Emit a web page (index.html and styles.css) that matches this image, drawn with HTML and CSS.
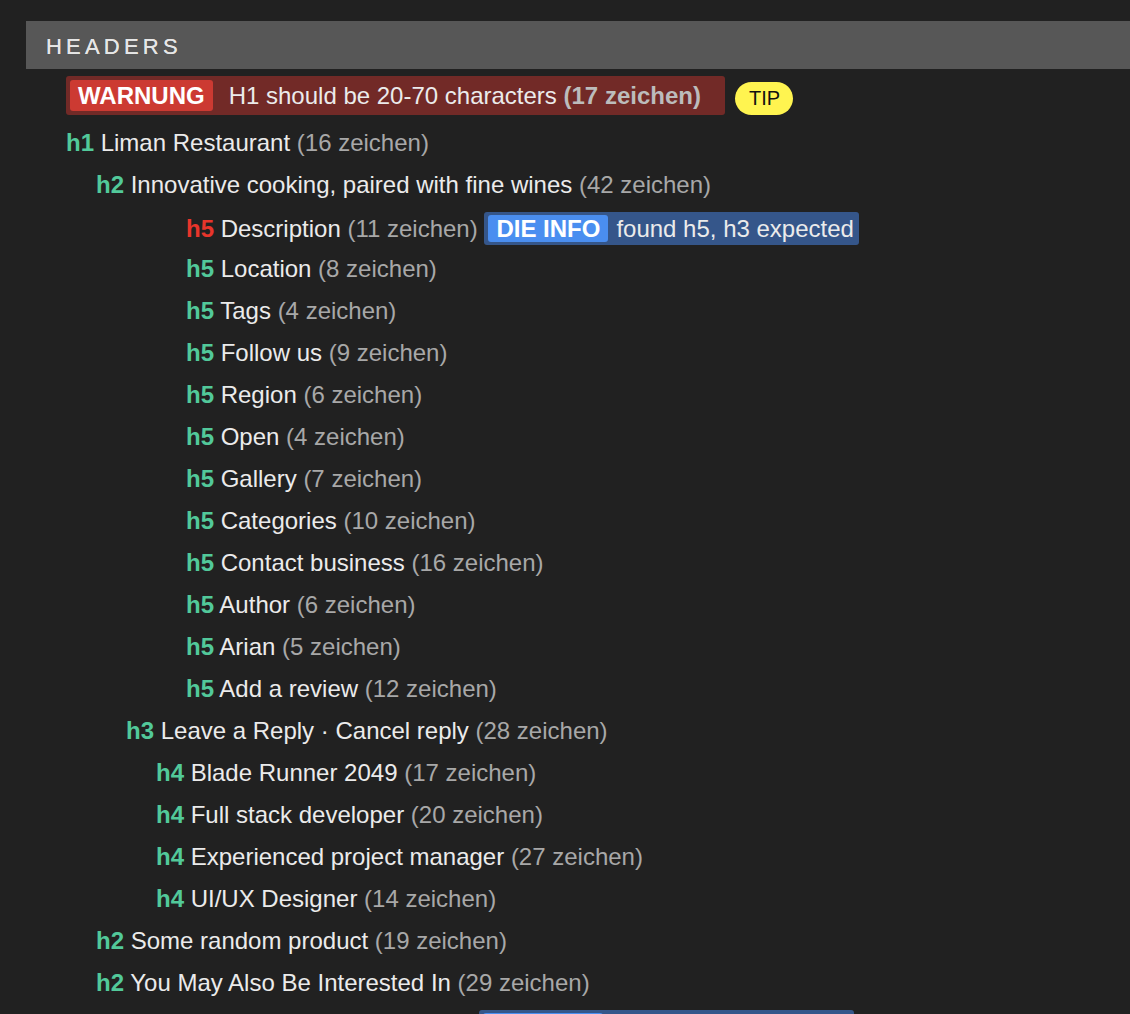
FILE: index.html
```html
<!DOCTYPE html>
<html lang="en">
<head>
    <meta charset="UTF-8">
    <meta name="viewport" content="width=device-width, initial-scale=1.0">
    <title>Headers</title>
    <link rel="stylesheet" href="styles.css">
</head>
<body>

<div class="panel">
    <div class="panel-title">HEADERS</div>

    <div class="notice-row">
        <div class="notice warn">
            <span class="notice-label">WARNUNG</span>
            <span class="notice-text">H1 should be 20-70 characters <b class="notice-count">(17 zeichen)</b></span>
        </div>
        <span class="tip">TIP</span>
    </div>

    <ul class="outline">
        <li class="lvl-1"><span class="tag">h1</span> Liman Restaurant <span class="count">(16 zeichen)</span></li>
        <li class="lvl-2"><span class="tag">h2</span> Innovative cooking, paired with fine wines <span class="count">(42 zeichen)</span></li>
        <li class="lvl-5 flagged"><span class="tag bad">h5</span> Description <span class="count">(11 zeichen)</span>
            <span class="notice info"><span class="notice-label">DIE INFO</span><span class="notice-text">found h5, h3 expected</span></span>
        </li>
        <li class="lvl-5"><span class="tag">h5</span> Location <span class="count">(8 zeichen)</span></li>
        <li class="lvl-5"><span class="tag">h5</span> Tags <span class="count">(4 zeichen)</span></li>
        <li class="lvl-5"><span class="tag">h5</span> Follow us <span class="count">(9 zeichen)</span></li>
        <li class="lvl-5"><span class="tag">h5</span> Region <span class="count">(6 zeichen)</span></li>
        <li class="lvl-5"><span class="tag">h5</span> Open <span class="count">(4 zeichen)</span></li>
        <li class="lvl-5"><span class="tag">h5</span> Gallery <span class="count">(7 zeichen)</span></li>
        <li class="lvl-5"><span class="tag">h5</span> Categories <span class="count">(10 zeichen)</span></li>
        <li class="lvl-5"><span class="tag">h5</span> Contact business <span class="count">(16 zeichen)</span></li>
        <li class="lvl-5"><span class="tag">h5</span> Author <span class="count">(6 zeichen)</span></li>
        <li class="lvl-5"><span class="tag">h5</span> Arian <span class="count">(5 zeichen)</span></li>
        <li class="lvl-5"><span class="tag">h5</span> Add a review <span class="count">(12 zeichen)</span></li>
        <li class="lvl-3"><span class="tag">h3</span> Leave a Reply · Cancel reply <span class="count">(28 zeichen)</span></li>
        <li class="lvl-4"><span class="tag">h4</span> Blade Runner 2049 <span class="count">(17 zeichen)</span></li>
        <li class="lvl-4"><span class="tag">h4</span> Full stack developer <span class="count">(20 zeichen)</span></li>
        <li class="lvl-4"><span class="tag">h4</span> Experienced project manager <span class="count">(27 zeichen)</span></li>
        <li class="lvl-4"><span class="tag">h4</span> UI/UX Designer <span class="count">(14 zeichen)</span></li>
        <li class="lvl-2"><span class="tag">h2</span> Some random product <span class="count">(19 zeichen)</span></li>
        <li class="lvl-2"><span class="tag">h2</span> You May Also Be Interested In <span class="count">(29 zeichen)</span></li>
        <li class="lvl-5 flagged"><span class="tag bad">h5</span> Newsletter <span class="count">(10 zeichen)</span>
            <span class="notice info"><span class="notice-label">DIE INFO</span><span class="notice-text">found h5, h3 expected</span></span>
        </li>
    </ul>
</div>

</body>
</html>
```

FILE: styles.css
```css
body {
    margin: 0;
    background-color: #212121;
    color: #ebebeb;
    font-family: "Liberation Sans", Arial, Helvetica, sans-serif;
    font-size: 24px;
    overflow: hidden;
}

.panel {
    padding: 21px 0 0 26px;
}

.panel-title {
    height: 48px;
    box-sizing: border-box;
    display: flex;
    align-items: center;
    padding: 3px 0 0 20px;
    background-color: #575757;
    color: #e6e6e6;
    font-size: 22px;
    letter-spacing: 4.2px;
    text-shadow: 0 0 0.6px #e6e6e6;
}

/* warning line under the title */
.notice-row {
    display: flex;
    align-items: center;
    gap: 12px;
    margin: 7px 0 0 40px;
}

.notice {
    display: inline-flex;
    align-items: center;
    border-radius: 3px;
    white-space: nowrap;
}

.notice-label {
    color: #fff;
    font-weight: bold;
    border-radius: 3px;
}

.warn {
    background-color: #722a27;
    padding: 4px 24px 4px 4px;
}

.warn .notice-label {
    background-color: #cc3a32;
    line-height: 31px;
    padding: 0 8px;
    margin-right: 16px;
}

.notice-count {
    color: #bcbcbc;
}

.info {
    background-color: #35568a;
    padding: 3px 5px 3px 4px;
    line-height: 27px;
}

.info .notice-label {
    background-color: #4a8ef0;
    padding: 0 8px;
    margin-right: 8px;
}

.tip {
    display: inline-block;
    background-color: #fff450;
    color: #111;
    font-size: 20px;
    line-height: 33px;
    padding: 0 13px 0 14px;
    border-radius: 17px;
    margin: 6px 0 0 -2px;
}

/* heading outline */
.outline {
    list-style: none;
    margin: 7px 0 0 0;
    padding: 0;
}

.outline li {
    height: 42px;
    line-height: 42px;
    white-space: nowrap;
}

.outline li.flagged {
    height: 38px;
    line-height: 38px;
    padding-top: 4px;
}

.lvl-1 { padding-left: 40px; }
.lvl-2 { padding-left: 70px; }
.lvl-3 { padding-left: 100px; }
.lvl-4 { padding-left: 130px; }
.lvl-5 { padding-left: 160px; }

.tag {
    color: #52c99a;
    font-weight: bold;
}

.tag.bad {
    color: #e8352b;
}

.count {
    color: #a8a8a8;
}
```
